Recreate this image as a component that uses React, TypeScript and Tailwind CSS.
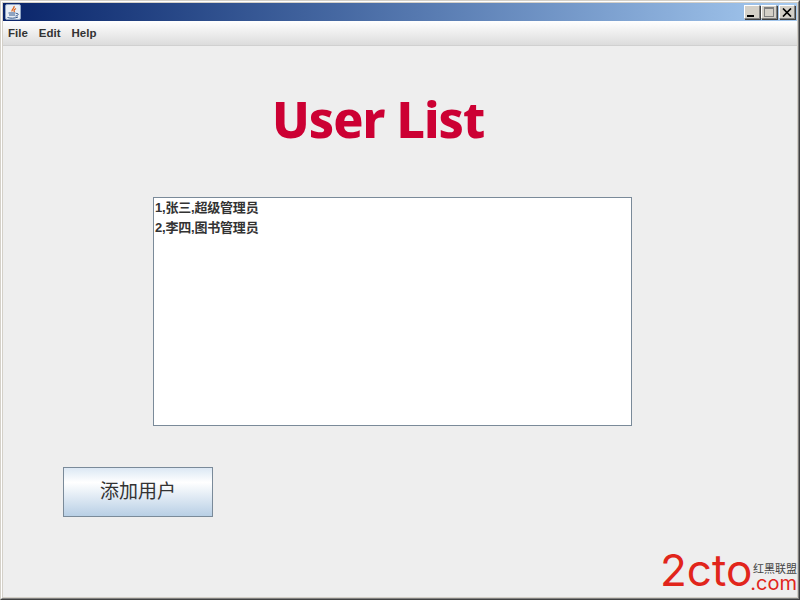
const sans = 'font-["Liberation_Sans","Noto_Sans_CJK_SC",sans-serif]'

function WinButton({ children }: { children: React.ReactNode }) {
  return (
    <div className="flex h-[14px] w-[16px] items-center justify-center border border-t-white border-l-white border-r-[#808080] border-b-[#808080] bg-[#d4d0c8] shadow-[1px_1px_0_#404040]">
      {children}
    </div>
  )
}

function JavaIcon() {
  return (
    <div className="flex h-[16px] w-[16px] items-center justify-center rounded-[2px] border border-[#8fa4c4] bg-[#e8eef6]">
      <svg width="14" height="14" viewBox="0 0 14 14" fill="none">
        <path d="M8 1C9 3 5.500 4 6 6.500M10 3.500C8 4.500 7.500 5.500 8.500 7" stroke="#e0641c" strokeWidth="1.300" />
        <path d="M2.500 8h7M3 10h6M1.500 12.500c3 1 7 1 10.500-.5M10 8.500c3-.5 3 2-.5 2.500" stroke="#34588c" strokeWidth="1" />
      </svg>
    </div>
  )
}

function TitleBar() {
  return (
    <div className="flex h-[18px] items-center justify-between bg-gradient-to-r from-[#0a246a] to-[#a6caf0] pr-[2px] pl-[2px]">
      <JavaIcon />
      <div className="flex">
        <WinButton>
          <div className="mt-[7px] mr-[3px] h-[2px] w-[7px] bg-black" />
        </WinButton>
        <div className="ml-px">
          <WinButton>
            <div className="h-[10px] w-[10px] border border-t-2 border-[#808080]" />
          </WinButton>
        </div>
        <div className="ml-[2px]">
          <WinButton>
            <svg width="10" height="9" viewBox="0 0 10 9">
              <path d="M1 .5l8 8M9 .5l-8 8" stroke="#000" strokeWidth="1.700" />
            </svg>
          </WinButton>
        </div>
      </div>
    </div>
  )
}

function MenuBar() {
  return (
    <div className="flex h-[25px] items-center gap-[11px] border-b border-[#d0d0d0] bg-gradient-to-b from-white to-[#dcdcdc] pt-px pl-[5px] text-[11.500px] font-bold text-[#333333]">
      <span>File</span>
      <span>Edit</span>
      <span>Help</span>
    </div>
  )
}

export default function App() {
  return (
    <div className={`h-[600px] w-[800px] overflow-hidden border border-t-[#d4d0c8] border-l-[#d4d0c8] border-r-[#404040] border-b-[#404040] ${sans}`}>
      <div className="h-full border border-t-white border-l-white border-r-[#808080] border-b-[#808080] bg-[#d4d0c8] p-px">
        <div className="relative flex h-full flex-col bg-[#eeeeee]">
          <TitleBar />
          <MenuBar />

          <h1 className='mt-[45px] ml-[269px] font-["Noto_Sans"] text-[50px] leading-[56px] font-extrabold tracking-[-1px] text-[#cc0033]'>
            User List
          </h1>

          <div className="mt-[50px] ml-[150px] h-[229px] w-[479px] border border-[#7a8a99] bg-white pl-px text-[13px] leading-[20px] font-bold tracking-[-0.200px] text-[#333333]">
            <div>1,张三,超级管理员</div>
            <div>2,李四,图书管理员</div>
          </div>

          <button className="mt-[41px] ml-[60px] h-[50px] w-[150px] border border-[#7a8a99] bg-gradient-to-b from-[#dce8f4] via-white via-30% to-[#b8cfe5] text-[19px] text-[#333333]">
            添加用户
          </button>

          <div className="absolute right-0 bottom-[4px] flex items-end text-[#e1251b]">
            <span className='mb-[3px] font-["Inter"] text-[44px] leading-[40px]'>2cto</span>
            <div className="mb-px -ml-[2px] flex flex-col items-end">
              <span className="-mb-px text-[11px] leading-[11px] text-[#444444]">红黑联盟</span>
              <span className='font-["Inter"] text-[20px] leading-[18px]'>.com</span>
            </div>
          </div>
        </div>
      </div>
    </div>
  )
}
